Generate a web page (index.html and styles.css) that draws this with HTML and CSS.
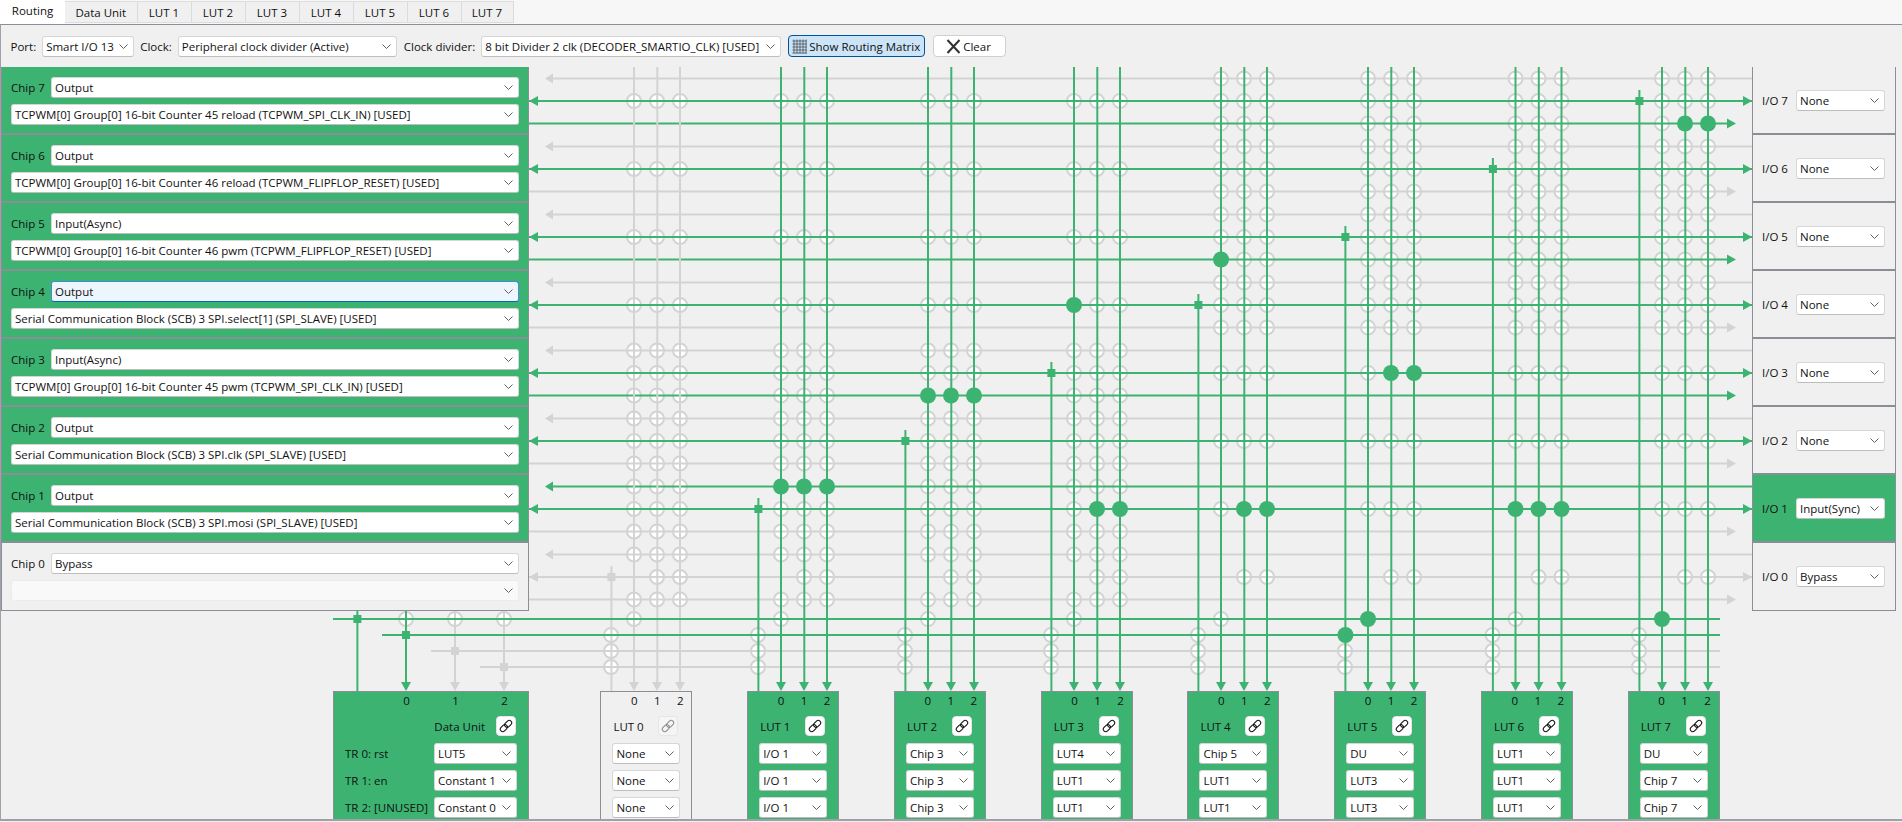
FILE: index.html
```html
<!DOCTYPE html>
<html lang="en">
<head>
    <meta charset="UTF-8">
    <title>Smart I/O Routing</title>
    <link rel="stylesheet" href="styles.css">
</head>
<body>
    <div class="tabs">
        <div class="tab active">Routing</div>
        <div class="tab wide">Data Unit</div>
        <div class="tab">LUT 1</div>
        <div class="tab">LUT 2</div>
        <div class="tab">LUT 3</div>
        <div class="tab">LUT 4</div>
        <div class="tab">LUT 5</div>
        <div class="tab">LUT 6</div>
        <div class="tab narrow">LUT 7</div>
    </div>
    <div class="tab-body">
        <div class="toolbar">
            <label class="tool-label">Port:</label>
            <select class="select port-select"><option>Smart I/O 13</option></select>
            <label class="tool-label">Clock:</label>
            <select class="select clock-select"><option>Peripheral clock divider (Active)</option></select>
            <label class="tool-label">Clock divider:</label>
            <select class="select divider-select"><option>8 bit Divider 2 clk (DECODER_SMARTIO_CLK) [USED]</option></select>
            <button class="tool-btn matrix-btn">
                <svg class="btn-icon" width="15" height="15" viewBox="0 0 15 15">
                    <path d="M2 0.5V14.5M5 0.5V14.5M8 0.5V14.5M11 0.5V14.5M14 0.5V14.5M0.5 2H15M0.5 5H15M0.5 8H15M0.5 11H15M0.5 14H15" fill="none" stroke="#5c6670" stroke-width="1"/>
                </svg>
                Show Routing Matrix
            </button>
            <button class="tool-btn clear-btn">
                <svg class="btn-icon" width="15" height="15" viewBox="0 0 15 15">
                    <path d="M1.5 1L13.5 14M13.5 1L1.5 14" fill="none" stroke="#333" stroke-width="2"/>
                </svg>
                Clear
            </button>
        </div>

        <div class="board">
            <svg id="wires" class="wires" width="1902" height="822"></svg>

            <div class="board-top">
                <div class="chips">
                    <div class="chip used">
                        <div class="chip-line"><span class="chip-name">Chip 7</span><select class="select"><option>Output</option></select></div>
                        <select class="select"><option>TCPWM[0] Group[0] 16-bit Counter 45 reload (TCPWM_SPI_CLK_IN) [USED]</option></select>
                    </div>
                    <div class="chip used">
                        <div class="chip-line"><span class="chip-name">Chip 6</span><select class="select"><option>Output</option></select></div>
                        <select class="select"><option>TCPWM[0] Group[0] 16-bit Counter 46 reload (TCPWM_FLIPFLOP_RESET) [USED]</option></select>
                    </div>
                    <div class="chip used">
                        <div class="chip-line"><span class="chip-name">Chip 5</span><select class="select"><option>Input(Async)</option></select></div>
                        <select class="select"><option>TCPWM[0] Group[0] 16-bit Counter 46 pwm (TCPWM_FLIPFLOP_RESET) [USED]</option></select>
                    </div>
                    <div class="chip used">
                        <div class="chip-line"><span class="chip-name">Chip 4</span><select class="select focused"><option>Output</option></select></div>
                        <select class="select"><option>Serial Communication Block (SCB) 3 SPI.select[1] (SPI_SLAVE) [USED]</option></select>
                    </div>
                    <div class="chip used">
                        <div class="chip-line"><span class="chip-name">Chip 3</span><select class="select"><option>Input(Async)</option></select></div>
                        <select class="select"><option>TCPWM[0] Group[0] 16-bit Counter 45 pwm (TCPWM_SPI_CLK_IN) [USED]</option></select>
                    </div>
                    <div class="chip used">
                        <div class="chip-line"><span class="chip-name">Chip 2</span><select class="select"><option>Output</option></select></div>
                        <select class="select"><option>Serial Communication Block (SCB) 3 SPI.clk (SPI_SLAVE) [USED]</option></select>
                    </div>
                    <div class="chip used">
                        <div class="chip-line"><span class="chip-name">Chip 1</span><select class="select"><option>Output</option></select></div>
                        <select class="select"><option>Serial Communication Block (SCB) 3 SPI.mosi (SPI_SLAVE) [USED]</option></select>
                    </div>
                    <div class="chip">
                        <div class="chip-line"><span class="chip-name">Chip 0</span><select class="select"><option>Bypass</option></select></div>
                        <select class="select" disabled><option></option></select>
                    </div>
                </div>

                <div class="ios">
                    <div class="io"><span class="io-name">I/O 7</span><select class="select"><option>None</option></select></div>
                    <div class="io"><span class="io-name">I/O 6</span><select class="select"><option>None</option></select></div>
                    <div class="io"><span class="io-name">I/O 5</span><select class="select"><option>None</option></select></div>
                    <div class="io"><span class="io-name">I/O 4</span><select class="select"><option>None</option></select></div>
                    <div class="io"><span class="io-name">I/O 3</span><select class="select"><option>None</option></select></div>
                    <div class="io"><span class="io-name">I/O 2</span><select class="select"><option>None</option></select></div>
                    <div class="io used"><span class="io-name">I/O 1</span><select class="select"><option>Input(Sync)</option></select></div>
                    <div class="io"><span class="io-name">I/O 0</span><select class="select"><option>Bypass</option></select></div>
                </div>
            </div>

            <div class="blocks">
                <div class="block data-unit used">
                    <div class="pins"><span>0</span><span>1</span><span>2</span></div>
                    <div class="block-head"><span class="block-name">Data Unit</span><button class="link-btn"></button></div>
                    <div class="tr-line"><span class="tr-name">TR 0: rst</span><select class="select"><option>LUT5</option></select></div>
                    <div class="tr-line"><span class="tr-name">TR 1: en</span><select class="select"><option>Constant 1</option></select></div>
                    <div class="tr-line"><span class="tr-name">TR 2: [UNUSED]</span><select class="select"><option>Constant 0</option></select></div>
                </div>
                <div class="block lut">
                    <div class="pins"><span>0</span><span>1</span><span>2</span></div>
                    <div class="block-head"><span class="block-name">LUT 0</span><button class="link-btn off"></button></div>
                    <select class="select"><option>None</option></select>
                    <select class="select"><option>None</option></select>
                    <select class="select"><option>None</option></select>
                </div>
                <div class="block lut used">
                    <div class="pins"><span>0</span><span>1</span><span>2</span></div>
                    <div class="block-head"><span class="block-name">LUT 1</span><button class="link-btn"></button></div>
                    <select class="select"><option>I/O 1</option></select>
                    <select class="select"><option>I/O 1</option></select>
                    <select class="select"><option>I/O 1</option></select>
                </div>
                <div class="block lut used">
                    <div class="pins"><span>0</span><span>1</span><span>2</span></div>
                    <div class="block-head"><span class="block-name">LUT 2</span><button class="link-btn"></button></div>
                    <select class="select"><option>Chip 3</option></select>
                    <select class="select"><option>Chip 3</option></select>
                    <select class="select"><option>Chip 3</option></select>
                </div>
                <div class="block lut used">
                    <div class="pins"><span>0</span><span>1</span><span>2</span></div>
                    <div class="block-head"><span class="block-name">LUT 3</span><button class="link-btn"></button></div>
                    <select class="select"><option>LUT4</option></select>
                    <select class="select"><option>LUT1</option></select>
                    <select class="select"><option>LUT1</option></select>
                </div>
                <div class="block lut used">
                    <div class="pins"><span>0</span><span>1</span><span>2</span></div>
                    <div class="block-head"><span class="block-name">LUT 4</span><button class="link-btn"></button></div>
                    <select class="select"><option>Chip 5</option></select>
                    <select class="select"><option>LUT1</option></select>
                    <select class="select"><option>LUT1</option></select>
                </div>
                <div class="block lut used">
                    <div class="pins"><span>0</span><span>1</span><span>2</span></div>
                    <div class="block-head"><span class="block-name">LUT 5</span><button class="link-btn"></button></div>
                    <select class="select"><option>DU</option></select>
                    <select class="select"><option>LUT3</option></select>
                    <select class="select"><option>LUT3</option></select>
                </div>
                <div class="block lut used">
                    <div class="pins"><span>0</span><span>1</span><span>2</span></div>
                    <div class="block-head"><span class="block-name">LUT 6</span><button class="link-btn"></button></div>
                    <select class="select"><option>LUT1</option></select>
                    <select class="select"><option>LUT1</option></select>
                    <select class="select"><option>LUT1</option></select>
                </div>
                <div class="block lut used">
                    <div class="pins"><span>0</span><span>1</span><span>2</span></div>
                    <div class="block-head"><span class="block-name">LUT 7</span><button class="link-btn"></button></div>
                    <select class="select"><option>DU</option></select>
                    <select class="select"><option>Chip 7</option></select>
                    <select class="select"><option>Chip 7</option></select>
                </div>
            </div>
        </div>
    </div>
    <script src="wires.js"></script>
</body>
</html>
```

FILE: styles.css
```css
body {
    margin: 0;
    width: 1902px;
    height: 822px;
    overflow: hidden;
    background: #f0f0f0;
    color: #111;
    font-family: "Open Sans", "Noto Sans", Arial, sans-serif;
    font-size: 11.5px;
}

/* tab strip */
.tabs {
    display: flex;
    height: 24px;
    background: #f7f7f7;
}
.tab {
    width: 54px;
    box-sizing: border-box;
    height: 22px;
    margin-top: 1px;
    line-height: 22px;
    text-align: center;
    background: #f0f0f0;
    border: 1px solid #dcdcdc;
    border-left: none;
}
.tab.active {
    width: 65px;
    height: 24px;
    margin-top: 0;
    background: #fff;
    border: none;
}
.tab.wide { width: 72.5px; }
.tab.narrow { width: 52px; }

.tab-body {
    box-sizing: border-box;
    height: 797px;
    border-top: 1px solid #8b8d97;
    border-left: 1px solid #a0a0a8;
    border-bottom: 2px solid #a0a0a8;
}

/* toolbar */
.toolbar {
    display: flex;
    align-items: center;
    height: 22px;
    padding: 10px 0 10px 9.5px;
}
.tool-label { margin-right: 6px; }
.select {
    display: block;
    box-sizing: border-box;
    height: 21px;
    padding: 0 18px 0 3px;
    font: inherit;
    color: #111;
    border: 1px solid #d6d6d6;
    border-bottom-color: #bdbdbd;
    border-radius: 3px;
    appearance: none;
    background: #fff url("data:image/svg+xml,%3Csvg xmlns='http://www.w3.org/2000/svg' width='9' height='5'%3E%3Cpath d='M.5.5l4 4 4-4' fill='none' stroke='%23606060'/%3E%3C/svg%3E") no-repeat right 5px center;
}
.select[disabled] {
    background-color: #f9f9f9;
    border-color: #ececec;
    opacity: 1;
}
.select.focused {
    background-color: #eef6fd;
    border-color: #3c8fd4;
    border-bottom-color: #0067c0;
}
.port-select { width: 92px; margin-right: 6px; }
.clock-select { width: 219.5px; margin-right: 6.5px; }
.divider-select { width: 300px; margin-right: 7px; }
.tool-btn {
    display: flex;
    align-items: center;
    gap: 2px;
    box-sizing: border-box;
    height: 22px;
    padding: 0;
    font: inherit;
    color: #111;
    border: 1px solid #d0d0d0;
    border-radius: 4px;
    background: #fff;
}
.matrix-btn {
    width: 137px;
    padding-left: 3px;
    margin-right: 8px;
    background: #cce4f7;
    border-color: #005499;
}
.clear-btn {
    width: 73px;
    padding-left: 12px;
}
.btn-icon { flex: none; }

/* routing canvas */
.board {
    position: relative;
    display: flex;
    flex-direction: column;
    justify-content: space-between;
    height: 752px;
}
.wires {
    position: absolute;
    left: -1px;
    top: -67px;
}
.wires .line { fill: none; stroke-width: 2; }
.wires .line.on { stroke: #3cb371; }
.wires .line.off { stroke: #d3d3d3; }
.wires .node { fill: #fff; stroke: #d3d3d3; stroke-width: 2; }
.wires .fill.on { fill: #3cb371; }
.wires .fill.off { fill: #d3d3d3; }

.board-top {
    position: relative;
    display: flex;
    justify-content: space-between;
    width: 1895px;
}
.chips {
    box-sizing: border-box;
    width: 528px;
    border: 1px solid #8b8d97;
    border-top: none;
    background: #f0f0f0;
}
.chip {
    box-sizing: border-box;
    height: 68px;
    padding: 10px 9px 0;
    border-bottom: 2px solid #8b8d97;
}
.chip:last-child { height: 67px; border-bottom: none; }
.chip-line {
    display: flex;
    align-items: center;
    margin-bottom: 6px;
}
.chip-name { width: 40px; flex: none; }
.chip-line .select { flex: 1; }
.chip > .select { width: 100%; }
.used { background: #3cb371; }

.ios {
    box-sizing: border-box;
    width: 144px;
    border: 1px solid #8b8d97;
    border-top: none;
    background: #f0f0f0;
}
.io {
    display: flex;
    align-items: center;
    box-sizing: border-box;
    height: 68px;
    padding: 0 10px 0 9px;
    border-bottom: 2px solid #8b8d97;
}
.io:last-child { height: 67px; border-bottom: none; }
.io-name { width: 34px; flex: none; }
.io .select { flex: 1; }

/* bottom row of blocks */
.blocks {
    position: relative;
    display: flex;
    height: 128px;
    padding-left: 332px;
}
.block {
    box-sizing: border-box;
    width: 92px;
    margin-right: 54.75px;
    padding: 0 10px 0 11px;
    border: 1px solid #8b8d97;
    border-bottom: none;
    background: #f0f0f0;
}
.block.used { background: #3cb371; }
.data-unit {
    width: 196px;
    margin-right: 71.4px;
    padding: 0 11px;
}
.pins {
    display: flex;
    height: 18px;
    margin-bottom: 6px;
    padding-left: 10.5px;
    line-height: 18px;
}
.pins span { flex: none; width: 23px; text-align: center; }
.data-unit .pins { padding-left: 37px; }
.data-unit .pins span { width: 49px; }
.block-head {
    display: flex;
    align-items: center;
    justify-content: space-between;
    height: 20px;
    margin-bottom: 7px;
    padding-left: 1px;
}
.data-unit .block-head { justify-content: flex-end; gap: 11px; }
.link-btn {
    flex: none;
    width: 20px;
    height: 20px;
    margin-right: 3px;
    padding: 0;
    border: 1px solid #e6e6e6;
    border-radius: 4px;
    background: #fff;
    color: #111;
}
.data-unit .link-btn { margin-right: 1px; }
.link-btn.off { color: #8c8c8c; background: #f5f5f5; }
.link-btn svg { display: block; margin: 0 auto; }
.lut .select { width: 68px; margin-bottom: 6px; }
.tr-line {
    display: flex;
    align-items: center;
    justify-content: space-between;
    margin-bottom: 6px;
}
.tr-line .select { width: 83px; }
```

FILE: wires.js
```js
// draws the routing matrix on top of the board and fills the link icons
const SVG_NS = "http://www.w3.org/2000/svg";
const BOTTOM = 691;
const RIGHT = 1752;
const LEFT = 529;

const lutBase = [611, 758, 905, 1051, 1198, 1345, 1492.5, 1639];
const rowA = (r) => 78.5 + 68 * r;
const rowB = (r) => 101 + 68 * r;
const rowC = (r) => 123.5 + 68 * r;
const data = [619, 635, 651, 667];

const onA = [6];
const onB = [0, 1, 2, 3, 4, 5, 6];
const onC = [0, 2, 4];

// filled crossings: lut, pin, y
const dots = [
    [1, 0, rowA(6)], [1, 1, rowA(6)], [1, 2, rowA(6)],
    [2, 0, rowC(4)], [2, 1, rowC(4)], [2, 2, rowC(4)],
    [3, 0, rowB(3)], [3, 1, rowB(6)], [3, 2, rowB(6)],
    [4, 0, rowC(2)], [4, 1, rowB(6)], [4, 2, rowB(6)],
    [5, 0, data[0]], [5, 1, rowB(4)], [5, 2, rowB(4)],
    [6, 0, rowB(6)], [6, 1, rowB(6)], [6, 2, rowB(6)],
    [7, 0, data[0]], [7, 1, rowC(0)], [7, 2, rowC(0)],
];

let svg;

function add(tag, attrs) {
    let el = document.createElementNS(SVG_NS, tag);
    for (let key in attrs) el.setAttribute(key, attrs[key]);
    svg.appendChild(el);
    return el;
}

function hLine(y, x1, x2, on) {
    add("line", { x1: x1, y1: y, x2: x2, y2: y, class: "line " + (on ? "on" : "off") });
}

function vLine(x, y1, y2, on) {
    add("line", { x1: x, y1: y1, x2: x, y2: y2, class: "line " + (on ? "on" : "off") });
}

function arrow(points, on) {
    add("polygon", { points: points, class: "fill " + (on ? "on" : "off") });
}

function square(x, y, on) {
    add("rect", { x: x - 4, y: y - 4, width: 8, height: 8, class: "fill " + (on ? "on" : "off") });
}

function isDot(lut, pin, y) {
    return dots.some((d) => d[0] === lut && d[1] === pin && d[2] === y);
}

// which rows carry a switch for a given lut pin
function switchRows(lut, pin) {
    let rows = [];
    if (lut < 4) {
        for (let r = 0; r < 4; r++) rows.push(rowB(r));
        for (let r = 4; r < 7; r++) rows.push(rowA(r), rowB(r), rowC(r));
        rows.push(rowA(7));
        if (pin > 0) rows.push(rowB(7));
        rows.push(rowC(7));
    } else {
        for (let r = 0; r < 4; r++) rows.push(rowA(r), rowB(r), rowC(r));
        for (let r = 4; r < 7; r++) rows.push(rowB(r));
        if (pin > 0) rows.push(rowB(7));
    }
    if (pin === 0) rows.push(data[0]);
    return rows;
}

function drawWires() {
    svg = document.getElementById("wires");

    // switches go under the wires
    lutBase.forEach((base, lut) => {
        for (let pin = 0; pin < 3; pin++) {
            switchRows(lut, pin).forEach((y) => {
                if (!isDot(lut, pin, y)) add("circle", { cx: base + 23 * (pin + 1), cy: y, r: 7, class: "node" });
            });
        }
        data.slice(1).forEach((y) => {
            if (!(lut === 5 && y === data[1])) add("circle", { cx: base, cy: y, r: 7, class: "node" });
        });
    });
    [406, 455, 504].forEach((x) => add("circle", { cx: x, cy: data[0], r: 7, class: "node" }));

    // rows that sit below the columns
    for (let r = 0; r < 8; r++) {
        let a = onA.includes(r);
        let c = onC.includes(r);
        hLine(rowA(r), 552, RIGHT, a);
        hLine(rowC(r), LEFT, 1728, c);
        arrow("545," + rowA(r) + " 553," + (rowA(r) - 5) + " 553," + (rowA(r) + 5), a);
        arrow("1736," + rowC(r) + " 1727," + (rowC(r) - 5) + " 1727," + (rowC(r) + 5), c);
    }
    hLine(rowB(7), LEFT, RIGHT, false);
    hLine(data[2], 431, 1720, false);
    hLine(data[3], 480, 1720, false);

    // columns
    lutBase.forEach((base, lut) => {
        let on = lut > 0;
        let top = rowB(7 - lut);
        vLine(base + 0.4, top - 11, BOTTOM, on);
        for (let pin = 1; pin < 4; pin++) {
            let x = base + 23 * pin;
            vLine(pin === 2 ? x + 0.3 : x, 67, BOTTOM - 6, on);
            arrow(x + "," + BOTTOM + " " + (x - 5) + "," + (BOTTOM - 9) + " " + (x + 5) + "," + (BOTTOM - 9), on);
        }
    });
    vLine(357.4, 611, BOTTOM, true);
    [[406, true], [455, false], [504, false]].forEach((p) => {
        vLine(p[0], 611, BOTTOM - 6, p[1]);
        arrow(p[0] + "," + BOTTOM + " " + (p[0] - 5) + "," + (BOTTOM - 9) + " " + (p[0] + 5) + "," + (BOTTOM - 9), p[1]);
    });

    // rows that sit above the columns
    for (let r = 0; r < 8; r++) {
        let y = rowB(r);
        let on = onB.includes(r);
        if (on) hLine(y, LEFT, RIGHT, true);
        arrow(LEFT + "," + y + " 538," + (y - 5) + " 538," + (y + 5), on);
        arrow(RIGHT + "," + y + " 1743," + (y - 5) + " 1743," + (y + 5), on);
    }
    hLine(data[0], 333, 1720, true);
    hLine(data[1], 382, 1720, true);

    // crossings and outputs
    dots.forEach((d) => {
        add("circle", { cx: lutBase[d[0]] + 23 * (d[1] + 1), cy: d[2], r: 8, class: "fill on" });
    });
    add("circle", { cx: 1345.4, cy: data[1], r: 8, class: "fill on" });
    lutBase.forEach((base, lut) => square(base + 0.4, rowB(7 - lut), lut > 0));
    square(357.4, data[0], true);
    square(406, data[1], true);
    square(455, data[2], false);
    square(504, data[3], false);
}

function drawLinkIcons() {
    document.querySelectorAll(".link-btn").forEach((btn) => {
        btn.innerHTML = '<svg width="14" height="14" viewBox="0 0 16 16"><g transform="rotate(-45 8 8)" fill="none" stroke="currentColor" stroke-width="1.2">' +
            '<rect x="0" y="5.2" width="9" height="5.6" rx="2.8"/><rect x="7" y="5.2" width="9" height="5.6" rx="2.8"/></g></svg>';
    });
}

document.addEventListener("DOMContentLoaded", () => {
    drawWires();
    drawLinkIcons();
});
```
